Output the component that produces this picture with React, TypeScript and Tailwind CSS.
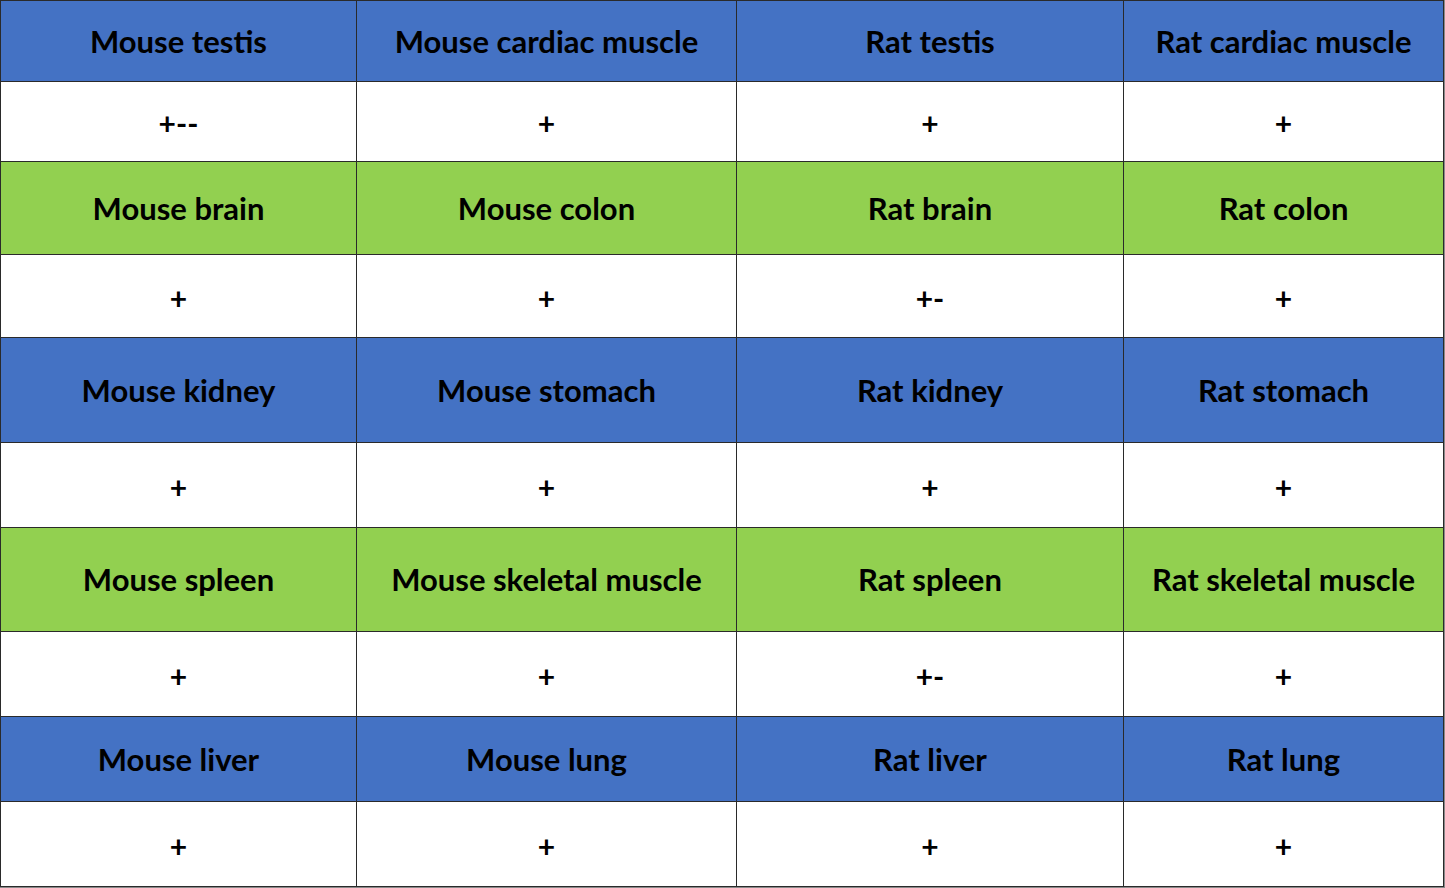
const rows: { kind: "blue" | "green" | "white"; cells: string[] }[] = [
  { kind: "blue", cells: ["Mouse testis", "Mouse cardiac muscle", "Rat testis", "Rat cardiac muscle"] },
  { kind: "white", cells: ["+--", "+", "+", "+"] },
  { kind: "green", cells: ["Mouse brain", "Mouse colon", "Rat brain", "Rat colon"] },
  { kind: "white", cells: ["+", "+", "+-", "+"] },
  { kind: "blue", cells: ["Mouse kidney", "Mouse stomach", "Rat kidney", "Rat stomach"] },
  { kind: "white", cells: ["+", "+", "+", "+"] },
  { kind: "green", cells: ["Mouse spleen", "Mouse skeletal muscle", "Rat spleen", "Rat skeletal muscle"] },
  { kind: "white", cells: ["+", "+", "+-", "+"] },
  { kind: "blue", cells: ["Mouse liver", "Mouse lung", "Rat liver", "Rat lung"] },
  { kind: "white", cells: ["+", "+", "+", "+"] },
];

const bg = {
  blue: "bg-[#4472c4] text-[31px]",
  green: "bg-[#92d050] text-[31px]",
  white: "bg-white text-[30px] pt-1",
};

export default function App() {
  return (
    <div className="min-h-screen w-full bg-[#8a8a8a]" style={{ fontFamily: "Lato, 'Liberation Sans', sans-serif" }}>
      <div className="grid w-[1444px] grid-cols-[355px_379px_386px_319px] grid-rows-[80px_79px_92px_82px_104px_84px_103px_84px_84px_84px] gap-px bg-[#2a2a2a] p-px">
        {rows.map((row, r) =>
          row.cells.map((text, c) => (
            <div
              key={`${r}-${c}`}
              className={`flex items-center justify-center font-bold text-black ${bg[row.kind]}`}
            >
              {text}
            </div>
          ))
        )}
      </div>
    </div>
  );
}
